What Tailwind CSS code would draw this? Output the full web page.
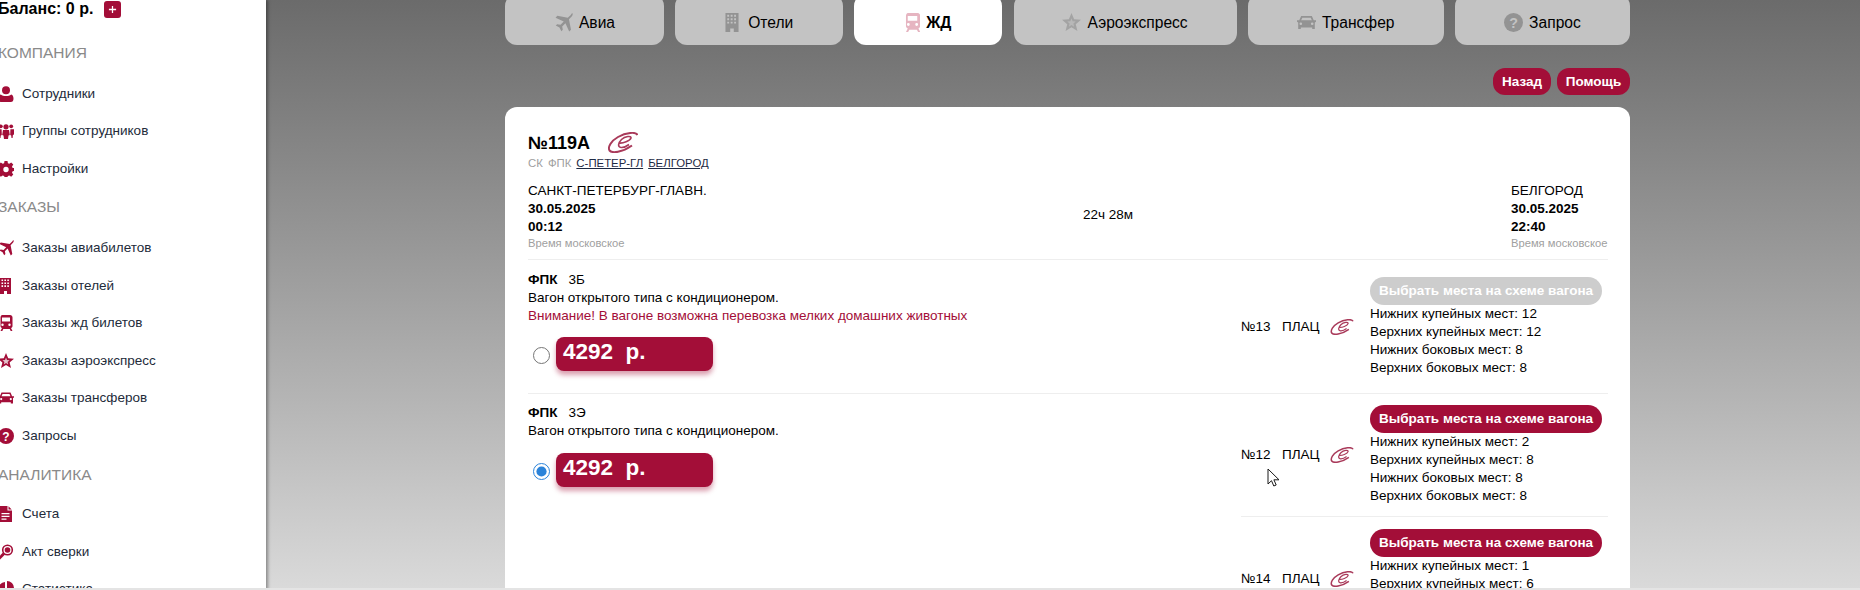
<!DOCTYPE html>
<html lang="ru">
<head>
<meta charset="utf-8">
<script src="https://cdn.jsdelivr.net/npm/@tailwindcss/browser@4"></script>
</head>
<body class="m-0 overflow-hidden">
<div class="relative flex h-[590px] w-[1860px] overflow-hidden font-['Liberation_Sans',Arial,sans-serif] text-[13.5px] leading-[18px] text-black">

  <!-- Sidebar -->
  <aside class="relative z-10 h-[590px] w-[266px] shrink-0 overflow-hidden bg-white shadow-[2px_0_3px_rgba(0,0,0,0.35)]">
    <div class="-ml-[2px] text-[#232b3a]">
      <div class="flex h-[18px] items-center text-[16px] font-bold text-black">
        <span>Баланс: 0 р.</span>
        <span class="ml-[11px] flex h-[17px] w-[17px] items-center justify-center rounded-[3px] bg-[#a30e38]">
          <svg viewBox="0 0 10 10" class="h-[9px] w-[9px]"><path d="M5 1v8M1 5h8" stroke="#fff" stroke-width="1.4"/></svg>
        </span>
      </div>

      <div class="mt-[25px] flex h-[20px] items-center text-[15.5px] text-[#8a8a8a]">КОМПАНИЯ</div>
      <ul class="mt-[12px] text-[#a30e38]">
        <li class="flex h-[37.5px] items-center gap-[8px]"><svg viewBox="0 0 16 16" class="h-[16px] w-[16px] shrink-0 fill-current"><circle cx="8" cy="4.2" r="4"/><path d="M2.8 8.4c1.2 1 3.2 1.6 5.2 1.6s4-.6 5.2-1.6c1.6.5 2.3 2 2.3 4.3 0 2-1 3.3-2.6 3.3H3.100C1.500 16 .5 14.700.5 12.700c0-2.300.7-3.800 2.300-4.300z"/></svg><span class="text-[#232b3a]">Сотрудники</span></li>
        <li class="flex h-[37.5px] items-center gap-[8px]"><svg viewBox="0 0 16 16" class="h-[16px] w-[16px] shrink-0 fill-current"><circle cx="8" cy="3.800" r="2.600"/><circle cx="2.800" cy="3.300" r="1.900"/><circle cx="13.200" cy="3.300" r="1.900"/><path d="M5 7h6l.8 5-1.300.4-.5 3.600H6l-.5-3.600L4.200 12zM0 6.300h3.600l.2 5.700-1 .4-.3 2.600H1.400l-.3-3-1.100-.5zM12.400 6.300H16V11.500l-1.100.5-.3 3h-1.100l-.3-2.600-1-.4z"/></svg><span class="text-[#232b3a]">Группы сотрудников</span></li>
        <li class="flex h-[37.5px] items-center gap-[8px]"><svg viewBox="0 0 16 16" class="h-[16px] w-[16px] shrink-0 fill-current"><path fill-rule="evenodd" d="M6.500 0h3l.4 2.200 1.400.6L13.200 1.500l2.100 2.100L14 5.500l.6 1.400L16 7v3l-1.400.3-.6 1.400 1.300 1.900-2.100 2.100-1.900-1.300-1.400.6-.4 1H6.500l-.4-1-1.400-.6-1.900 1.300-2.100-2.100 1.300-1.900-.6-1.400L0 10V7l1.400-.1.6-1.400L.7 3.600l2.100-2.100 1.900 1.300 1.400-.6zM8 5.800a2.700 2.700 0 1 0 0 5.400 2.700 2.700 0 0 0 0-5.400z"/></svg><span class="text-[#232b3a]">Настройки</span></li>
      </ul>

      <div class="mt-[9px] flex h-[20px] items-center text-[15.5px] text-[#8a8a8a]">ЗАКАЗЫ</div>
      <ul class="mt-[13px] text-[#a30e38]">
        <li class="flex h-[37.5px] items-center gap-[8px]"><svg viewBox="0 0 16 16" class="h-[16px] w-[16px] shrink-0 fill-current"><path d="M15.500.3c.5.500.2 1.800-.8 2.800L12.600 5.200l1.700 8.800-1.500 1.500-3.200-6.900-2.700 2.700.5 2.800-1.200 1.200-1.600-3.100-3.100-1.600 1.200-1.200 2.800.5 2.700-2.700L1.300 3.900 2.800 2.400l8.800 1.700L13.700 2c1-1 1.300-2.200 1.800-1.700z"/></svg><span class="text-[#232b3a]">Заказы авиабилетов</span></li>
        <li class="flex h-[37.5px] items-center gap-[8px]"><svg viewBox="0 0 16 16" class="h-[16px] w-[16px] shrink-0 fill-current"><path fill-rule="evenodd" d="M2 0h11v16H9v-3H6v3H2zM3.500 1.500v1.600h1.600V1.500zm2.900 0v1.600H8V1.500zm2.900 0v1.600h1.600V1.500zM3.500 4.400V6h1.600V4.400zm2.900 0V6H8V4.400zm2.900 0V6h1.600V4.400zM3.500 7.300v1.600h1.600V7.300zm2.900 0v1.600H8V7.300zm2.900 0v1.600h1.600V7.300z"/></svg><span class="text-[#232b3a]">Заказы отелей</span></li>
        <li class="flex h-[37.5px] items-center gap-[8px]"><svg viewBox="0 0 16 16" class="h-[16px] w-[16px] shrink-0 fill-current"><path fill-rule="evenodd" d="M4 0h8c1.500 0 2.500 1 2.500 2.500V11c0 1-.6 1.700-1.500 2l1.500 3h-1.800l-1-2H5.300l-1 2H2.500L4 13c-.9-.3-1.500-1-1.500-2V2.500C2.500 1 3.500 0 4 0zM4 2.500v4h8v-4zM4.500 8.500a1.200 1.200 0 1 0 0 2.400 1.200 1.200 0 0 0 0-2.400zm7 0a1.200 1.200 0 1 0 0 2.400 1.200 1.200 0 0 0 0-2.400z"/></svg><span class="text-[#232b3a]">Заказы жд билетов</span></li>
        <li class="flex h-[37.5px] items-center gap-[8px]"><svg viewBox="0 0 16 16" class="h-[16px] w-[16px] shrink-0 fill-current"><path d="M8 0l2.200 5.300 5.800.4-4.400 3.800 1.400 5.600L8 12.100l-5 3 1.400-5.600L0 5.700l5.800-.4z"/><path d="M8 4.500l1 2.500 2.600.2-2 1.700.6 2.600L8 10.100l-2.200 1.400.6-2.600-2-1.700L7 7z" fill="#e3c2cb"/></svg><span class="text-[#232b3a]">Заказы аэроэкспресс</span></li>
        <li class="flex h-[37.5px] items-center gap-[8px]"><svg viewBox="0 0 16 16" class="h-[16px] w-[16px] shrink-0 fill-current"><path fill-rule="evenodd" d="M3.500 2.500h9l1.600 3.700H16v1.200l-1 .5v5.600h-2.200v-1.300H3.200v1.300H1V7.900L0 7.400V6.200h1.900zM4.500 3.900 3.500 6.200h9l-1-2.300zM3.200 8a1.100 1.100 0 1 0 0 2.200 1.100 1.100 0 0 0 0-2.200zm9.600 0a1.100 1.100 0 1 0 0 2.200 1.100 1.100 0 0 0 0-2.200z"/></svg><span class="text-[#232b3a]">Заказы трансферов</span></li>
        <li class="flex h-[37.5px] items-center gap-[8px]"><svg viewBox="0 0 16 16" class="h-[16px] w-[16px] shrink-0"><circle cx="8" cy="8" r="8" fill="currentColor"/><text x="8" y="12.500" text-anchor="middle" font-size="12" font-weight="700" fill="#fff" font-family="Liberation Sans">?</text></svg><span class="text-[#232b3a]">Запросы</span></li>
      </ul>

      <div class="mt-[10px] flex h-[20px] items-center text-[15.5px] text-[#8a8a8a]">АНАЛИТИКА</div>
      <ul class="mt-[11px] text-[#a30e38]">
        <li class="flex h-[37.5px] items-center gap-[8px]"><svg viewBox="0 0 16 16" class="h-[16px] w-[16px] shrink-0 fill-current"><path fill-rule="evenodd" d="M1 0h8.500v4.500H14V16H1zM10.500.3 13.700 3.500h-3.200zM3.500 7v1.200H11.500V7zm0 2.800V11H11.500V9.800zm0 2.800v1.100H8.500v-1.100z"/></svg><span class="text-[#232b3a]">Счета</span></li>
        <li class="flex h-[37.5px] items-center gap-[8px]"><svg viewBox="0 0 16 16" class="h-[16px] w-[16px] shrink-0"><circle cx="9.500" cy="6" r="4.800" fill="none" stroke="currentColor" stroke-width="1.600"/><circle cx="9.500" cy="6" r="2.800" fill="currentColor"/><path d="M6 9.500 1 14.500" stroke="currentColor" stroke-width="3"/></svg><span class="text-[#232b3a]">Акт сверки</span></li>
        <li class="flex h-[37.5px] items-center gap-[8px]"><svg viewBox="0 0 16 16" class="h-[16px] w-[16px] shrink-0 fill-current"><path d="M7 1v8h8A7.500 7.500 0 1 1 7 1zM9 0a7 7 0 0 1 7 7H9z"/></svg><span class="text-[#232b3a]">Статистика</span></li>
      </ul>
    </div>
  </aside>

  <!-- Main -->
  <main class="h-[590px] flex-1 bg-gradient-to-b from-[#6b6b6b] to-[#dadada] pl-[239px]">
    <div class="w-[1125px]">
      <!-- Tabs -->
      <nav class="-mt-[6px] flex h-[51px] justify-between text-[15.6px]">
        <a class="flex w-[159px] items-center justify-center gap-[6px] rounded-[12px] bg-[#c3c3c3] pt-[6px]"><svg viewBox="0 0 16 16" class="h-[19px] w-[19px] fill-[#939393]"><path d="M15.500.3c.5.500.2 1.800-.8 2.800L12.600 5.200l1.700 8.800-1.500 1.500-3.200-6.900-2.700 2.700.5 2.800-1.200 1.200-1.600-3.100-3.100-1.600 1.200-1.200 2.800.5 2.700-2.700L1.300 3.900 2.800 2.400l8.800 1.700L13.700 2c1-1 1.300-2.200 1.800-1.700z"/></svg>Авиа</a>
        <a class="flex w-[168px] items-center justify-center gap-[9px] rounded-[12px] bg-[#c3c3c3] pt-[6px]"><svg viewBox="2 0 11 16" class="h-[19px] w-[14px] fill-[#939393]"><path fill-rule="evenodd" d="M2 0h11v16H9v-3H6v3H2zM3.500 1.500v1.600h1.600V1.500zm2.900 0v1.600H8V1.500zm2.900 0v1.600h1.600V1.500zM3.500 4.400V6h1.600V4.400zm2.900 0V6H8V4.400zm2.900 0V6h1.600V4.400zM3.500 7.300v1.600h1.600V7.300zm2.900 0v1.600H8V7.300zm2.900 0v1.600h1.600V7.300z"/></svg>Отели</a>
        <a class="flex w-[148px] items-center justify-center gap-[6px] rounded-[12px] bg-white pt-[6px] font-bold"><svg viewBox="2 0 12 16" class="h-[19px] w-[15px] fill-[#e6b5c1]"><path fill-rule="evenodd" d="M4 0h8c1.500 0 2.500 1 2.500 2.500V11c0 1-.6 1.700-1.500 2l1.500 3h-1.800l-1-2H5.300l-1 2H2.500L4 13c-.9-.3-1.500-1-1.500-2V2.500C2.500 1 3.500 0 4 0zM4 2.500v4h8v-4zM4.500 8.500a1.200 1.200 0 1 0 0 2.400 1.200 1.200 0 0 0 0-2.400zm7 0a1.200 1.200 0 1 0 0 2.400 1.200 1.200 0 0 0 0-2.400z"/></svg>ЖД</a>
        <a class="flex w-[223px] items-center justify-center gap-[6px] rounded-[12px] bg-[#c3c3c3] pt-[6px]"><svg viewBox="0 0 16 16" class="h-[19px] w-[19px] fill-[#a3a3a3]"><path d="M8 0l2.200 5.300 5.800.4-4.400 3.800 1.400 5.600L8 12.100l-5 3 1.400-5.600L0 5.700l5.800-.4z"/><path d="M8 4.500l1 2.500 2.600.2-2 1.700.6 2.600L8 10.100l-2.200 1.400.6-2.600-2-1.700L7 7z" fill="#b8b8b8"/></svg>Аэроэкспресс</a>
        <a class="flex w-[196px] items-center justify-center gap-[6px] rounded-[12px] bg-[#c3c3c3] pt-[6px]"><svg viewBox="0 0 16 16" class="h-[19px] w-[19px] fill-[#939393]"><path fill-rule="evenodd" d="M3.500 2.500h9l1.600 3.700H16v1.200l-1 .5v5.600h-2.200v-1.300H3.200v1.300H1V7.900L0 7.400V6.200h1.900zM4.500 3.900 3.500 6.200h9l-1-2.300zM3.200 8a1.100 1.100 0 1 0 0 2.200 1.100 1.100 0 0 0 0-2.200zm9.600 0a1.100 1.100 0 1 0 0 2.200 1.100 1.100 0 0 0 0-2.200z"/></svg>Трансфер</a>
        <a class="flex w-[175px] items-center justify-center gap-[6px] rounded-[12px] bg-[#c3c3c3] pt-[6px]"><svg viewBox="0 0 16 16" class="h-[19px] w-[19px]"><circle cx="8" cy="8" r="8" fill="#939393"/><text x="8" y="12.500" text-anchor="middle" font-size="12" font-weight="700" fill="#c3c3c3" font-family="Liberation Sans">?</text></svg>Запрос</a>
      </nav>

      <!-- Actions -->
      <div class="mt-[23px] flex h-[27px] justify-end gap-[6px] text-[13.5px] font-bold text-white">
        <button class="h-full w-[58px] rounded-[12px] bg-[#a30e38]">Назад</button>
        <button class="h-full w-[73px] rounded-[12px] bg-[#a30e38]">Помощь</button>
      </div>

      <!-- Card -->
      <section class="mt-[12px] h-[600px] rounded-t-[12px] bg-white pl-[23px] pr-[22px] pt-[25px]">
        <div class="flex h-[21px] items-center">
          <h1 class="text-[18px] font-bold">№119А</h1>
          <svg viewBox="0 0 30 21" class="ml-[18px] h-[21px] w-[30px]" fill="none" stroke="#a93a5a"><path d="M29.500 3C28-.5 18 .5 10 5 3 9-.5 15 1.500 18.500 4 21.500 14 20.500 24 13.500" stroke-width="2"/><path d="M11 11c4 .5 11-2 12-5 .8-2.500-6-2-9.500 1.500C10 11 9.500 15 13 15.500c3 .3 6-1.500 8-3" stroke-width="1.600"/></svg>
        </div>
        <div class="mt-[2px] flex h-[16px] items-center gap-[5px] text-[11.4px] text-[#a0a0a0]">
          <span>СК</span><span>ФПК</span><a class="text-[#1e2a44] underline">С-ПЕТЕР-ГЛ</a><a class="text-[#1e2a44] underline">БЕЛГОРОД</a>
        </div>

        <div class="mt-[11px] grid h-[68px] grid-cols-[555px_428px_1fr] items-center">
          <div>
            <div>САНКТ-ПЕТЕРБУРГ-ГЛАВН.</div>
            <div class="font-bold">30.05.2025</div>
            <div class="font-bold">00:12</div>
            <div class="text-[11.2px] leading-[14px] text-[#a0a0a0]">Время московское</div>
          </div>
          <div class="-mt-[3px]">22ч 28м</div>
          <div>
            <div>БЕЛГОРОД</div>
            <div class="font-bold">30.05.2025</div>
            <div class="font-bold">22:40</div>
            <div class="text-[11.2px] leading-[14px] text-[#a0a0a0]">Время московское</div>
          </div>
        </div>

        <!-- Row 1 -->
        <div class="mt-[9px] flex border-y border-[#eeeeee]">
          <div class="w-[713px] pt-[11px]">
            <div><b class="mr-[11px]">ФПК</b>3Б</div>
            <div>Вагон открытого типа с кондиционером.</div>
            <div class="text-[#a30e38]">Внимание! В вагоне возможна перевозка мелких домашних животных</div>
            <label class="ml-[5px] mt-[12px] flex items-start gap-[6px]">
              <input type="radio" name="car" class="m-0 mt-[10px] h-[17px] w-[17px]">
              <span class="h-[34px] w-[157px] whitespace-pre rounded-[8px] bg-[#a30e38] pl-[7px] text-[22.5px] font-bold leading-[30px] text-white shadow-[0_4px_5px_rgba(163,14,56,0.4)]">4292  р.</span>
            </label>
          </div>
          <div class="flex h-[133px] w-[367px] items-center">
            <span class="w-[41px]">№13</span><span class="w-[48px]">ПЛАЦ</span>
            <svg viewBox="0 0 30 21" class="h-[16px] w-[24px]" fill="none" stroke="#a93a5a"><path d="M29.500 3C28-.5 18 .5 10 5 3 9-.5 15 1.500 18.500 4 21.500 14 20.500 24 13.500" stroke-width="2"/><path d="M11 11c4 .5 11-2 12-5 .8-2.500-6-2-9.500 1.500C10 11 9.500 15 13 15.500c3 .3 6-1.500 8-3" stroke-width="1.600"/></svg>
            <div class="ml-[16px]">
              <button class="block h-[28px] w-[232px] rounded-[14px] bg-[#cdcdcd] text-[13.5px] font-bold text-white">Выбрать места на схеме вагона</button>
              <div>Нижних купейных мест: 12</div>
              <div>Верхних купейных мест: 12</div>
              <div>Нижних боковых мест: 8</div>
              <div>Верхних боковых мест: 8</div>
            </div>
          </div>
        </div>

        <!-- Row 2 -->
        <div class="flex">
          <div class="w-[713px] pt-[10px]">
            <div><b class="mr-[11px]">ФПК</b>3Э</div>
            <div>Вагон открытого типа с кондиционером.</div>
            <label class="ml-[5px] mt-[13px] flex items-start gap-[6px]">
              <input type="radio" name="car" checked class="m-0 mt-[10px] h-[17px] w-[17px] accent-[#2b83d9]">
              <span class="h-[34px] w-[157px] whitespace-pre rounded-[8px] bg-[#a30e38] pl-[7px] text-[22.5px] font-bold leading-[30px] text-white shadow-[0_4px_5px_rgba(163,14,56,0.4)]">4292  р.</span>
            </label>
          </div>
          <div class="w-[367px]">
            <div class="flex h-[123px] items-center border-b border-[#eeeeee]">
              <span class="w-[41px]">№12</span><span class="w-[48px]">ПЛАЦ</span>
              <svg viewBox="0 0 30 21" class="h-[16px] w-[24px]" fill="none" stroke="#a93a5a"><path d="M29.500 3C28-.5 18 .5 10 5 3 9-.5 15 1.500 18.500 4 21.500 14 20.500 24 13.500" stroke-width="2"/><path d="M11 11c4 .5 11-2 12-5 .8-2.500-6-2-9.500 1.500C10 11 9.500 15 13 15.500c3 .3 6-1.500 8-3" stroke-width="1.600"/></svg>
              <div class="ml-[16px]">
                <button class="block h-[28px] w-[232px] rounded-[14px] bg-[#a30e38] text-[13.5px] font-bold text-white">Выбрать места на схеме вагона</button>
                <div>Нижних купейных мест: 2</div>
                <div>Верхних купейных мест: 8</div>
                <div>Нижних боковых мест: 8</div>
                <div>Верхних боковых мест: 8</div>
              </div>
            </div>
            <div class="flex h-[124px] items-center">
              <span class="w-[41px]">№14</span><span class="w-[48px]">ПЛАЦ</span>
              <svg viewBox="0 0 30 21" class="h-[16px] w-[24px]" fill="none" stroke="#a93a5a"><path d="M29.500 3C28-.5 18 .5 10 5 3 9-.5 15 1.500 18.500 4 21.500 14 20.500 24 13.500" stroke-width="2"/><path d="M11 11c4 .5 11-2 12-5 .8-2.500-6-2-9.500 1.500C10 11 9.500 15 13 15.500c3 .3 6-1.500 8-3" stroke-width="1.600"/></svg>
              <div class="ml-[16px]">
                <button class="block h-[28px] w-[232px] rounded-[14px] bg-[#a30e38] text-[13.5px] font-bold text-white">Выбрать места на схеме вагона</button>
                <div>Нижних купейных мест: 1</div>
                <div>Верхних купейных мест: 6</div>
                <div>Нижних боковых мест: 8</div>
                <div>Верхних боковых мест: 8</div>
              </div>
            </div>
          </div>
        </div>
      </section>
    </div>
  </main>

  <!-- Pointer captured in the screenshot -->
  <svg viewBox="0 0 13 19" class="absolute left-[1267px] top-[468px] z-20 h-[19px] w-[13px]"><path d="M1 1v15l3.500-3.300 2.300 5.300 2.400-1-2.300-5.200H12z" fill="#fff" stroke="#1a1a1a" stroke-width="1"/></svg>
  <div class="absolute bottom-0 left-0 z-20 h-[2px] w-full bg-[#e4e4e4]"></div>
</div>
</body>
</html>
